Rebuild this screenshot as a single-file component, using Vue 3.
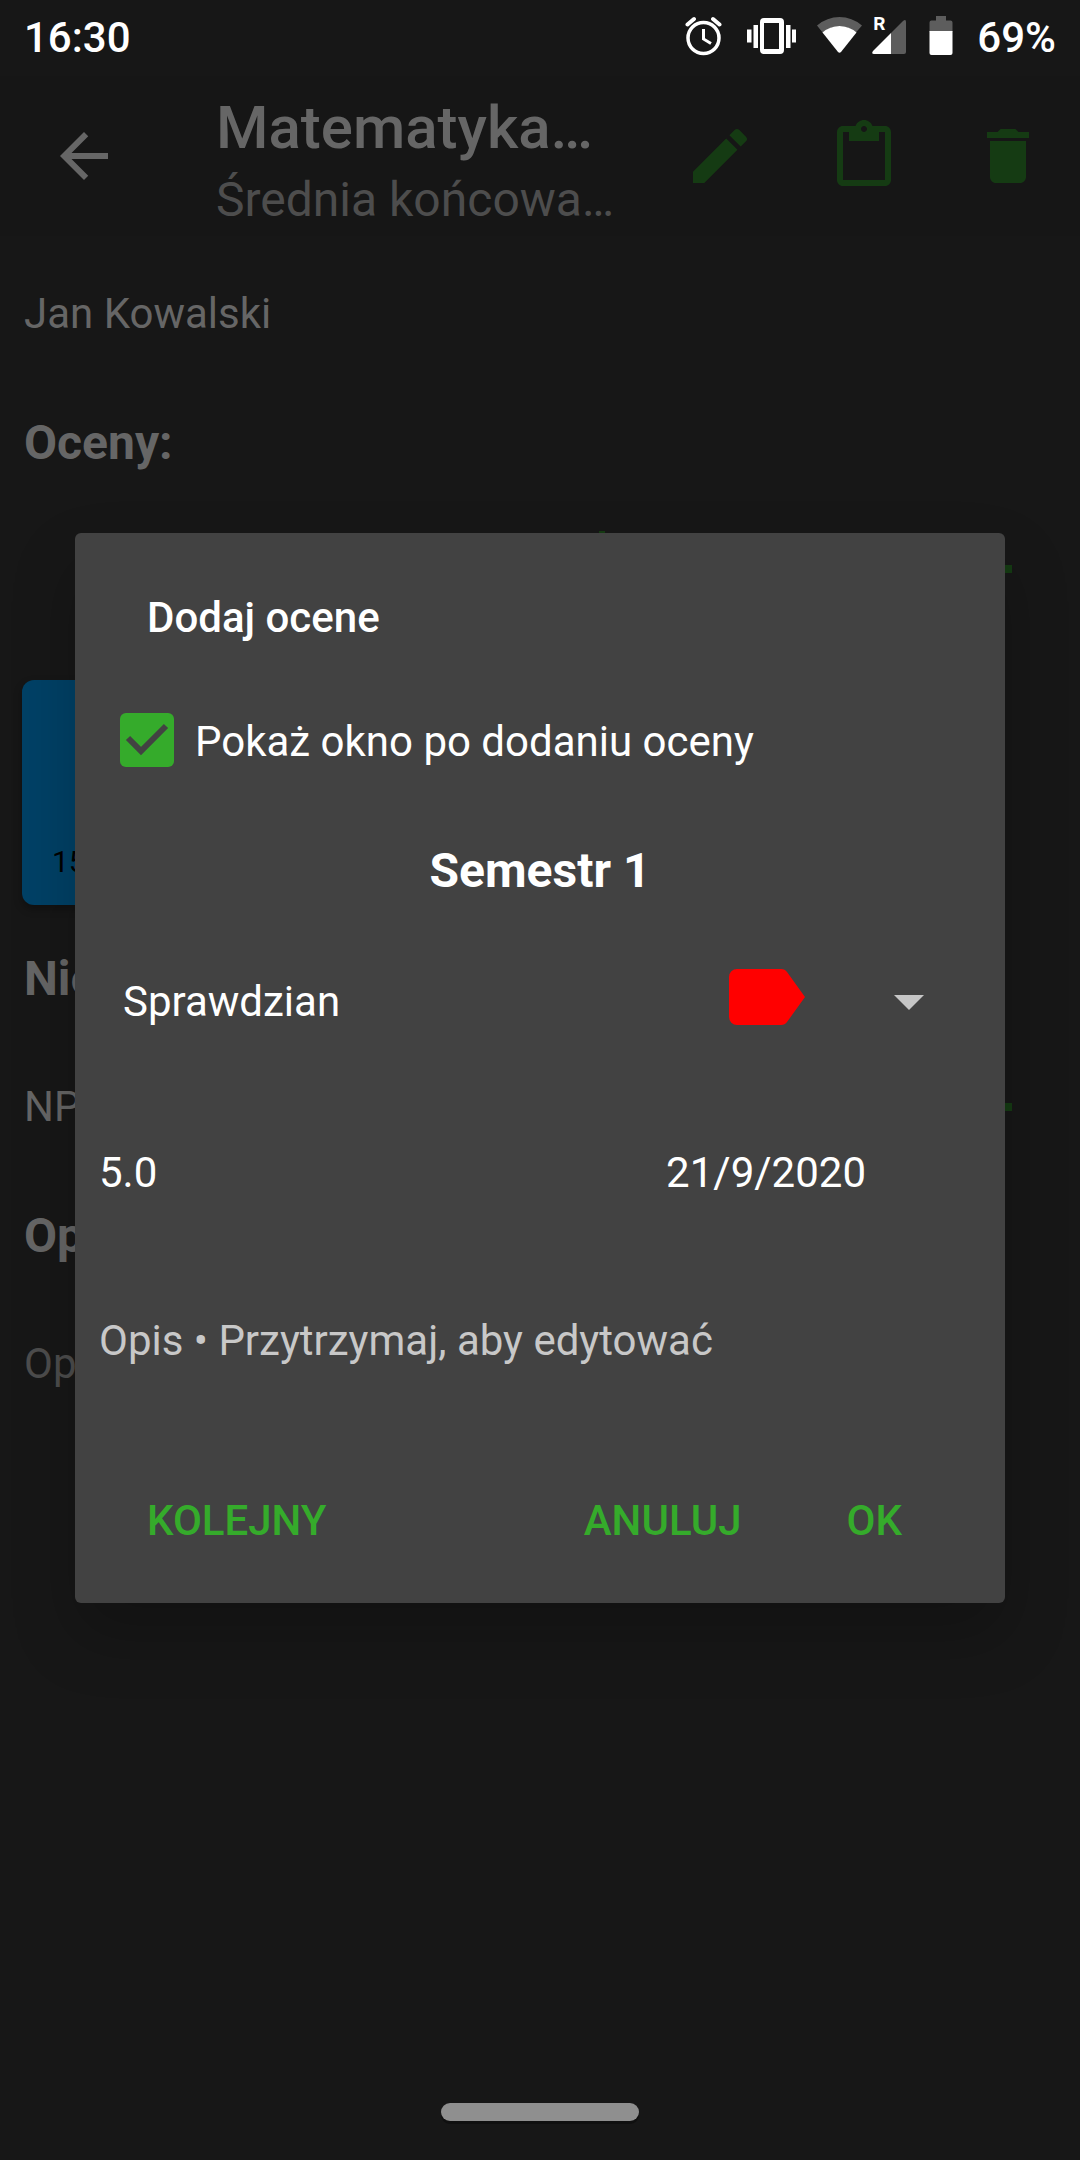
<script setup>
import { ref } from 'vue'

const showAfterAdd = ref(true)
const category = ref('Sprawdzian')
const categories = ['Sprawdzian']
const grade = '5.0'
const date = '21/9/2020'
const hint = 'Opis • Przytrzymaj, aby edytować'
</script>

<template>
  <div class="screen">
    <header class="status">
      <span class="clock">16:30</span>
      <div class="status-icons">
        <svg class="alarm" width="38" height="44" viewBox="0 0 38 44" fill="none" stroke="#fff">
          <circle cx="18.500" cy="22" r="15.500" stroke-width="3.500" />
          <path d="M18.500 13v10l7.500 4.500" stroke-width="3" />
          <path d="M2.500 8.500l6.500-5.500M34.500 8.500L28 3" stroke-width="4" stroke-linecap="round" />
        </svg>
        <svg class="vibrate" width="50" height="44" viewBox="0 0 50 44" fill="#fff">
          <path fill-rule="evenodd" d="M17 2h16a4 4 0 0 1 4 4v28a4 4 0 0 1-4 4H17a4 4 0 0 1-4-4V6a4 4 0 0 1 4-4zm0 5v26h15V7z" />
          <path d="M6.500 9H11v23H6.500zM0 13.500h4.500v13H0zM39 9h4.500v23H39zM45 13.500h4v13h-4z" />
        </svg>
        <svg class="wifi" width="46" height="44" viewBox="0 0 46 44">
          <path fill="#5d5d5d" d="M0 9.500Q10 1 22.500 1T45 9.500L38.500 17Q31 10 22.500 10T6 17z" />
          <path fill="#fff" d="M5.500 16.500Q13 10 22.500 10T39.500 16.500L24 36q-1.500 1.500-3 0z" />
        </svg>
        <div class="signal">
          <svg width="36" height="44" viewBox="0 0 36 44">
            <path fill="#5d5d5d" d="M32 5q3-2.500 3 1v30a2 2 0 0 1-2 2H20V17z" />
            <path fill="#fff" d="M20 17v21H3q-3 0-1-3z" />
          </svg>
          <span class="roaming">R</span>
        </div>
        <svg class="battery" width="24" height="44" viewBox="0 0 24 44">
          <path fill="#5d5d5d" d="M7 0h10v4.500h4.500A2 2 0 0 1 23.500 6.500V16H.5V6.500A2 2 0 0 1 2.500 4.500H7z" />
          <path fill="#fff" d="M.5 15h23v22a2 2 0 0 1-2 2h-19a2 2 0 0 1-2-2z" />
        </svg>
        <span>69%</span>
      </div>
    </header>

    <nav class="toolbar">
      <button class="back" aria-label="Wstecz">
        <svg width="72" height="72" viewBox="0 0 24 24"><path d="M20 11H7.830l5.590-5.590L12 4l-8 8 8 8 1.410-1.410L7.830 13H20v-2z" /></svg>
      </button>
      <div class="titles">
        <h1>Matematyka…</h1>
        <p>Średnia końcowa…</p>
      </div>
      <button class="action" aria-label="Edytuj">
        <svg width="72" height="72" viewBox="0 0 24 24"><path d="M3 17.250V21h3.750L17.810 9.940l-3.750-3.750L3 17.250zM20.710 7.040c.39-.39.39-1.020 0-1.410l-2.340-2.340c-.39-.39-1.020-.39-1.410 0l-1.830 1.830 3.750 3.750 1.830-1.830z" /></svg>
      </button>
      <button class="action" aria-label="Notatki">
        <svg width="72" height="72" viewBox="0 0 24 24"><path d="M19 2h-4.180C14.400.84 13.300 0 12 0c-1.300 0-2.400.84-2.820 2H5c-1.100 0-2 .9-2 2v16c0 1.100.9 2 2 2h14c1.100 0 2-.9 2-2V4c0-1.100-.9-2-2-2zm-7 0c.55 0 1 .45 1 1s-.45 1-1 1-1-.45-1-1 .45-1 1-1zm7 18H5V4h2v3h10V4h2v16z" /></svg>
      </button>
      <button class="action" aria-label="Usuń">
        <svg width="72" height="72" viewBox="0 0 24 24"><path d="M6 19c0 1.100.9 2 2 2h8c1.100 0 2-.9 2-2V7H6v12zM19 4h-3.500l-1-1h-5l-1 1H5v2h14V4z" /></svg>
      </button>
    </nav>

    <main class="content">
      <p>Jan Kowalski</p>
      <h2>Oceny:</h2>
      <div class="tools">
        <svg class="chart" width="6" height="76" viewBox="0 0 6 76"><path d="M0 0h6v76H0z" /></svg>
        <svg width="42" height="42" viewBox="0 0 42 42"><path d="M17 0h8v17h17v8H25v17h-8V25H0v-8h17z" /></svg>
      </div>
      <div class="card">15/9</div>
      <h2>Nie:</h2>
      <div class="row">
        <p>NP</p>
        <svg width="42" height="42" viewBox="0 0 42 42"><path d="M17 0h8v17h17v8H25v17h-8V25H0v-8h17z" /></svg>
      </div>
      <h2>Opis:</h2>
      <p class="muted">Opis</p>
    </main>

    <div class="handle"></div>

    <div class="overlay">
      <form class="dialog" role="dialog" aria-labelledby="dialog-title" @submit.prevent>
        <h3 id="dialog-title">Dodaj ocene</h3>
        <div class="check">
          <input id="show-after" v-model="showAfterAdd" type="checkbox" />
          <label for="show-after">Pokaż okno po dodaniu oceny</label>
        </div>
        <h4>Semestr 1</h4>
        <div class="picker">
          <select v-model="category" aria-label="Kategoria">
            <option v-for="c in categories" :key="c">{{ c }}</option>
          </select>
          <svg class="tag" width="76" height="56" viewBox="0 0 76 56"><path fill="#f00" d="M8 0h44q4 0 6 3l18 25-18 25q-2 3-6 3H8a8 8 0 0 1-8-8V8a8 8 0 0 1 8-8z" /></svg>
          <svg width="30" height="15" viewBox="0 0 30 15"><path fill="#c6c6c6" d="M0 0h30L15 15z" /></svg>
        </div>
        <div class="values">
          <button type="button">{{ grade }}</button>
          <button type="button">{{ date }}</button>
        </div>
        <button type="button" class="description">{{ hint }}</button>
        <div class="actions">
          <button type="button" class="next">KOLEJNY</button>
          <button type="button">ANULUJ</button>
          <button type="submit">OK</button>
        </div>
      </form>
    </div>
  </div>
</template>

<style>
body {
  background: #171717;
}
</style>

<style scoped>
.screen {
  position: relative;
  display: flex;
  flex-direction: column;
  min-height: 100vh;
  background: #171717;
  color: #666;
  font: 400 42px/48px Roboto, sans-serif;
}
h1, h2, h3, h4, p {
  margin: 0;
}
svg {
  display: block;
  flex: none;
}
button {
  padding: 0;
  border: 0;
  background: none;
  color: inherit;
  font: inherit;
}
.status {
  display: flex;
  align-items: center;
  justify-content: space-between;
  height: 76px;
  padding: 0 24px;
  color: #fff;
  font-weight: 500;
}
.status-icons {
  display: flex;
  align-items: center;
}
.alarm, .battery {
  margin-right: 24px;
}
.wifi {
  margin-right: 8px;
}
.vibrate {
  margin-right: 20px;
}
.signal {
  position: relative;
  margin-right: 22px;
}
.roaming {
  position: absolute;
  top: -2px;
  left: 2px;
  font-size: 19px;
  font-weight: 700;
  line-height: 20px;
}
.toolbar {
  display: flex;
  align-items: center;
  height: 160px;
  background: #161616;
}
.back {
  padding: 0 96px 0 48px;
  fill: #666;
}
.titles {
  flex: 1;
  min-width: 0;
  padding-top: 16px;
  line-height: 72px;
  white-space: nowrap;
}
h1 {
  font-size: 60px;
  font-weight: 500;
}
.titles p {
  font-size: 48px;
  color: #4d4d4d;
}
.action {
  display: flex;
  justify-content: center;
  width: 144px;
  fill: #153b13;
}
.content {
  padding: 54px 24px 0;
}
h2 {
  margin-top: 77px;
  font-size: 48px;
  line-height: 56px;
}
.tools {
  display: flex;
  align-items: center;
  justify-content: flex-end;
  height: 76px;
  margin: 60px 44px 73px 0;
  fill: #153b13;
}
.chart {
  margin-right: 365px;
}
.card {
  display: flex;
  align-items: flex-end;
  width: 202px;
  height: 225px;
  margin: 0 -2px;
  padding: 0 0 25px 30px;
  box-sizing: border-box;
  border-radius: 12px;
  background: #004166;
  color: #000;
  font-size: 30px;
  line-height: 36px;
  box-shadow: 0 4px 8px rgba(0, 0, 0, 0.3);
}
.card + h2 {
  margin-top: 46px;
}
.row {
  display: flex;
  align-items: center;
  justify-content: space-between;
  margin: 76px 44px 0 0;
  fill: #153b13;
}
.muted {
  margin-top: 76px;
  color: #4d4d4d;
}
.handle {
  align-self: center;
  width: 198px;
  height: 18px;
  margin: auto 0 39px;
  border-radius: 9px;
  background: #8f8f8f;
  box-shadow: 0 3px 0 #101010;
}
.overlay {
  position: absolute;
  inset: 0;
  display: flex;
  align-items: center;
  padding: 0 75px 24px;
}
.dialog {
  flex: 1;
  min-width: 0;
  padding: 61px 0 34px;
  border-radius: 6px;
  background: #424242;
  color: #fff;
  box-shadow: 0 32px 64px rgba(0, 0, 0, 0.22);
}
h3 {
  padding-left: 72px;
  font-size: 42px;
  font-weight: 500;
}
.check {
  display: flex;
  align-items: center;
  gap: 21px;
  height: 96px;
  margin-top: 50px;
  padding-left: 45px;
}
.check label {
  padding-top: 4px;
}
.check input {
  appearance: none;
  width: 54px;
  height: 54px;
  margin: 0;
  border: 6px solid #35ab2b;
  border-radius: 6px;
}
.check input:checked {
  border: 0;
  background: #35ab2b url("data:image/svg+xml,%3Csvg xmlns='http://www.w3.org/2000/svg' viewBox='0 0 54 54'%3E%3Cpath d='M8 25l13 13 25-25' fill='none' stroke='%23424242' stroke-width='6'/%3E%3C/svg%3E");
}
h4 {
  margin-top: 55px;
  font-size: 48px;
  line-height: 56px;
  text-align: center;
}
.picker {
  display: flex;
  align-items: center;
  height: 96px;
  margin-top: 55px;
  padding: 0 81px 0 48px;
}
select {
  appearance: none;
  flex: 1;
  min-width: 0;
  height: 96px;
  padding: 0;
  border: 0;
  background: none;
  color: #fff;
  font: inherit;
}
.tag {
  margin: 0 89px 10px 0;
}
.values {
  display: flex;
  justify-content: space-between;
  margin-top: 99px;
  padding: 0 139px 0 24px;
}
.description {
  display: block;
  margin-top: 120px;
  padding-left: 24px;
  color: #c8c8c8;
}
.actions {
  display: flex;
  gap: 105px;
  height: 96px;
  margin-top: 108px;
  padding: 0 103px 0 72px;
  color: #35ab2b;
  font-weight: 500;
}
.next {
  margin-right: auto;
}
</style>
